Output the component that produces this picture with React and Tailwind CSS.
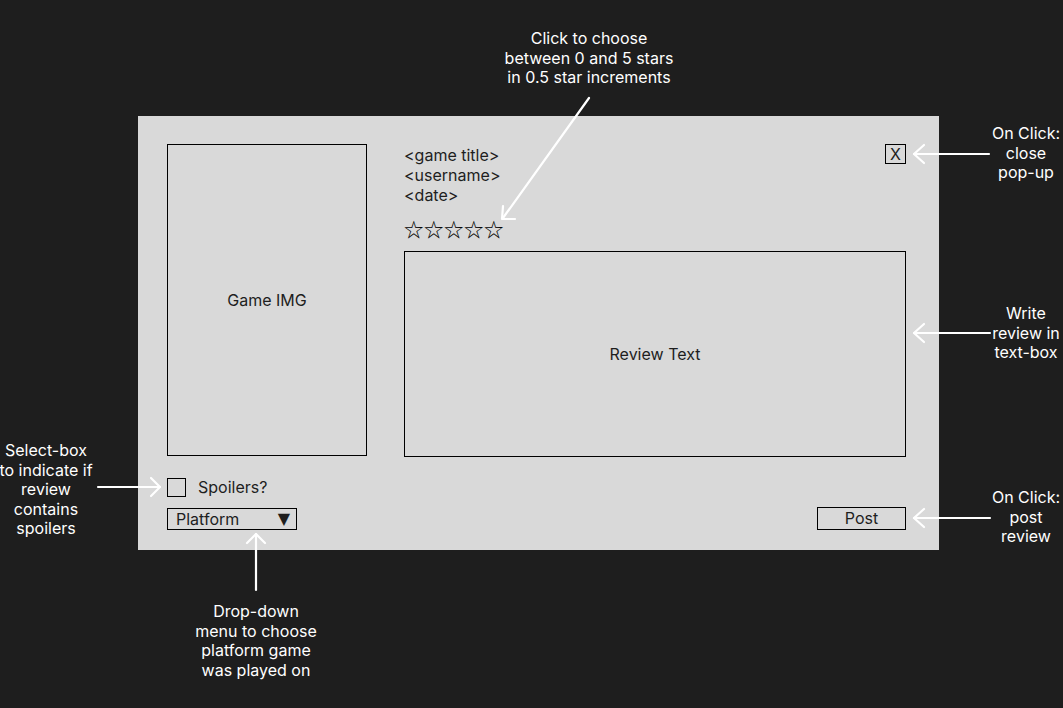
import React from 'react';

const font = { fontFamily: 'Inter, "Liberation Sans", sans-serif' };

function Note({ className, lines }) {
  return (
    <div className={`absolute -translate-x-1/2 text-center text-white text-[16px] leading-[19.5px] whitespace-nowrap ${className}`}>
      {lines.map(l => <div key={l}>{l}</div>)}
    </div>
  );
}

function Arrows() {
  return (
    <svg className="absolute inset-0 pointer-events-none" width="1063" height="708" fill="none" stroke="white" strokeWidth="2.2" strokeLinecap="round" strokeLinejoin="round">
      {/* stars */}
      <path d="M589 98 L503 218" />
      <path d="M503 206 L502 219 L515 219" />
      {/* close */}
      <path d="M989 154 L914 154" />
      <path d="M924 145 L914 154 L924 163" />
      {/* review text */}
      <path d="M990 333 L914 333" />
      <path d="M924 324 L914 333 L924 342" />
      {/* post */}
      <path d="M990 518 L914 518" />
      <path d="M924 509 L914 518 L924 527" />
      {/* spoilers */}
      <path d="M98 487 L160 487" />
      <path d="M151 478 L160 487 L151 496" />
      {/* platform */}
      <path d="M256 590 L256 534" />
      <path d="M247 543 L256 534 L265 543" />
    </svg>
  );
}

export default function App() {
  return (
    <div style={font} className="relative w-[1063px] h-[708px] bg-[#1e1e1e] pl-[138px] pt-[116px] overflow-hidden">
      <div className="w-[801px] h-[434px] bg-[#d9d9d9] pl-[29px] pr-[33px] pt-[28px] text-[16px] text-[#1e1e1e]">
        <div className="flex gap-[37px]">
          <div className="w-[200px] h-[312px] border-[1.5px] border-black flex items-center justify-center">
            Game IMG
          </div>
          <div className="flex-1 flex flex-col">
            <div className="flex justify-between items-start">
              <div className="leading-[20px] pt-[1px]">
                <div>&lt;game title&gt;</div>
                <div>&lt;username&gt;</div>
                <div>&lt;date&gt;</div>
              </div>
              <button className="w-[21px] h-[20px] border-[1.5px] border-black flex items-center justify-center leading-none text-[16px]">
                X
              </button>
            </div>
            <div className="mt-[12px] h-[24px] text-[19.5px] leading-[24px] text-black tracking-[0.5px]" style={{ fontFamily: '"Noto Sans CJK JP", "DejaVu Sans", sans-serif' }}>
              ☆☆☆☆☆
            </div>
            <div className="mt-[10px] h-[206px] border-[1.5px] border-black flex items-center justify-center">
              Review Text
            </div>
          </div>
        </div>
        <div className="mt-[21px] flex justify-between items-end">
          <div className="flex flex-col">
            <label className="flex items-center gap-[12px] h-[19px]">
              <span className="w-[19px] h-[19px] border-[1.5px] border-black" />
              <span className="-mt-[1px]">Spoilers?</span>
            </label>
            <div className="mt-[11px] w-[130px] h-[22px] border-[1.5px] border-black flex items-center justify-between pl-[8px] pr-[6px]">
              <span>Platform</span>
              <span className="text-[16px] leading-none" style={{ fontFamily: '"DejaVu Sans", sans-serif' }}>▼</span>
            </div>
          </div>
          <button className="w-[89px] h-[23px] border-[1.5px] border-black flex items-center justify-center pb-[2px]">
            Post
          </button>
        </div>
      </div>

      <Note className="left-[589px] top-[29px]" lines={['Click to choose', 'between 0 and 5 stars', 'in 0.5 star increments']} />
      <Note className="left-[1026px] top-[124px]" lines={['On Click:', 'close', 'pop-up']} />
      <Note className="left-[1026px] top-[304px]" lines={['Write', 'review in', 'text-box']} />
      <Note className="left-[1026px] top-[488px]" lines={['On Click:', 'post', 'review']} />
      <Note className="left-[46px] top-[441px]" lines={['Select-box', 'to indicate if', 'review', 'contains', 'spoilers']} />
      <Note className="left-[256px] top-[602px]" lines={['Drop-down', 'menu to choose', 'platform game', 'was played on']} />
      <Arrows />
    </div>
  );
}
